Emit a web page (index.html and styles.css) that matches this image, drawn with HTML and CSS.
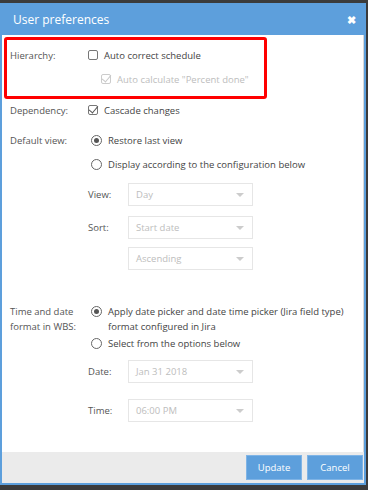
FILE: index.html
```html
<!DOCTYPE html>
<html lang="en">
<head>
  <meta charset="UTF-8">
  <title>User preferences</title>
  <link rel="stylesheet" href="styles.css">
</head>
<body>

<div class="dialog">
    <div class="dialog-header">
        <span class="dialog-title">User preferences</span>
        <span class="dialog-close">&#10006;</span>
    </div>

    <div class="dialog-body">
        <div class="highlight">
            <div class="pref-row">
                <div class="pref-label">Hierarchy:</div>
                <div class="pref-options">
                    <label class="opt"><span class="box"></span>Auto correct schedule</label>
                    <label class="opt opt-sub disabled"><span class="box checked"></span>Auto calculate "Percent done"</label>
                </div>
            </div>
        </div>

        <div class="pref-row dep-row">
            <div class="pref-label">Dependency:</div>
            <div class="pref-options">
                <label class="opt"><span class="box checked"></span>Cascade changes</label>
            </div>
        </div>

        <div class="pref-row view-row">
            <div class="pref-label">Default view:</div>
            <div class="pref-options">
                <label class="opt"><span class="radio on"></span>Restore last view</label>
                <label class="opt"><span class="radio"></span>Display according to the configuration below</label>
                <div class="fields">
                    <div class="field">
                        <span class="field-label">View:</span>
                        <div class="select">Day</div>
                    </div>
                    <div class="field">
                        <span class="field-label">Sort:</span>
                        <div class="select">Start date</div>
                    </div>
                    <div class="field field-extra">
                        <span class="field-label"></span>
                        <div class="select">Ascending</div>
                    </div>
                </div>
            </div>
        </div>

        <div class="pref-row time-row">
            <div class="pref-label">Time and date format in WBS:</div>
            <div class="pref-options">
                <label class="opt"><span class="radio on"></span><span>Apply date picker and date time picker (Jira field type) format configured in Jira</span></label>
                <label class="opt"><span class="radio"></span>Select from the options below</label>
                <div class="fields">
                    <div class="field">
                        <span class="field-label">Date:</span>
                        <div class="select">Jan 31 2018</div>
                    </div>
                    <div class="field">
                        <span class="field-label">Time:</span>
                        <div class="select">06:00 PM</div>
                    </div>
                </div>
            </div>
        </div>
    </div>

    <div class="dialog-footer">
        <button class="btn">Update</button>
        <button class="btn">Cancel</button>
    </div>
</div>

</body>
</html>
```

FILE: styles.css
```css
:root {
    --blue: #5d9fdc;
    --dark: #3b3b3b;
    --label: #555;
    --text: #444;
    --muted: #bdbdbd;
    --line: #e6e6e6;
}

* {
    margin: 0;
    padding: 0;
    box-sizing: border-box;
}

body {
    background: var(--dark);
    font-family: "Open Sans", sans-serif;
    font-size: 9.5px;
    color: var(--text);
    width: 368px;
    height: 490px;
    overflow: hidden;
    padding-top: 3px;
}

.dialog {
    width: 366px;
    height: 482px;
    background: #fff;
    border: 2px solid var(--blue);
    border-top: 0;
    display: flex;
    flex-direction: column;
}

.dialog-header {
    height: 32px;
    background: var(--blue);
    color: #fff;
    display: flex;
    align-items: center;
    justify-content: space-between;
    padding: 0 10px 0 13px;
    margin: 0 -2px;
}

.dialog-title {
    font-size: 12px;
}

.dialog-close {
    font-size: 11px;
    font-weight: bold;
}

.dialog-body {
    flex: 1;
    padding: 2px 2px 0 2px;
    border-right: 1px solid #d8d8d8;
}

.highlight {
    width: 263px;
    height: 62px;
    border: 3px solid #f00;
    border-radius: 3px;
    padding: 8px 0 0 3px;
}

.pref-row {
    display: flex;
    padding-left: 6px;
}

.highlight .pref-row {
    padding-left: 0;
}

.pref-label {
    width: 78px;
    flex-shrink: 0;
    color: var(--label);
    line-height: 15px;
}

.pref-options {
    display: flex;
    flex-direction: column;
}

.opt {
    display: flex;
    align-items: flex-start;
    line-height: 15px;
    color: var(--text);
}

.opt-sub {
    margin-top: 9px;
    margin-left: 13px;
}

.disabled {
    color: var(--muted);
}

.box {
    width: 10px;
    height: 10px;
    border: 1px solid #777;
    border-radius: 2px;
    margin: 2px 6px 0 0;
    flex-shrink: 0;
    position: relative;
}

.box.checked::after {
    content: "";
    position: absolute;
    left: 2px;
    top: -2px;
    width: 4px;
    height: 8px;
    border: solid #555;
    border-width: 0 1.5px 1.5px 0;
    transform: rotate(40deg);
}

.disabled .box {
    border-color: #ccc;
}

.disabled .box.checked::after {
    border-color: #c8c8c8;
}

.dep-row {
    margin-top: 4px;
}

.view-row {
    margin-top: 15px;
}

.view-row .opt + .opt {
    margin-top: 9px;
}

.radio {
    width: 11px;
    height: 11px;
    border: 1px solid #666;
    border-radius: 50%;
    margin: 2px 6px 0 3px;
    flex-shrink: 0;
    display: flex;
    align-items: center;
    justify-content: center;
}

.radio.on::after {
    content: "";
    width: 5px;
    height: 5px;
    border-radius: 50%;
    background: #555;
}

.fields {
    display: flex;
    flex-direction: column;
    gap: 10px;
    margin-top: 11px;
}

.field {
    display: flex;
    align-items: center;
}

.field-label {
    width: 40px;
    color: var(--label);
}

.select {
    width: 125px;
    height: 23px;
    border: 1px solid var(--line);
    color: var(--muted);
    padding: 0 7px;
    display: flex;
    align-items: center;
    justify-content: space-between;
}

.select::after {
    content: "";
    border-left: 4px solid transparent;
    border-right: 4px solid transparent;
    border-top: 4px solid #ccc;
    margin-right: 1px;
}

.field-extra {
    margin-top: -2px;
}

.time-row {
    margin-top: 34px;
}

.time-row .pref-label {
    width: 83px;
    padding-right: 8px;
}

.time-row .pref-options {
    margin-left: -5px;
}

.time-row .opt + .opt {
    margin-top: 2px;
}

.time-row .fields {
    margin-top: 9px;
    gap: 16px;
}

.dialog-footer {
    height: 31px;
    background: #ebebeb;
    display: flex;
    justify-content: flex-end;
    align-items: center;
    gap: 5px;
    padding-right: 1px;
}

.btn {
    width: 56px;
    height: 25px;
    background: var(--blue);
    color: #fff;
    border: 1px solid #7fb4e6;
    font-family: "Open Sans", sans-serif;
    font-size: 9.5px;
}
```
